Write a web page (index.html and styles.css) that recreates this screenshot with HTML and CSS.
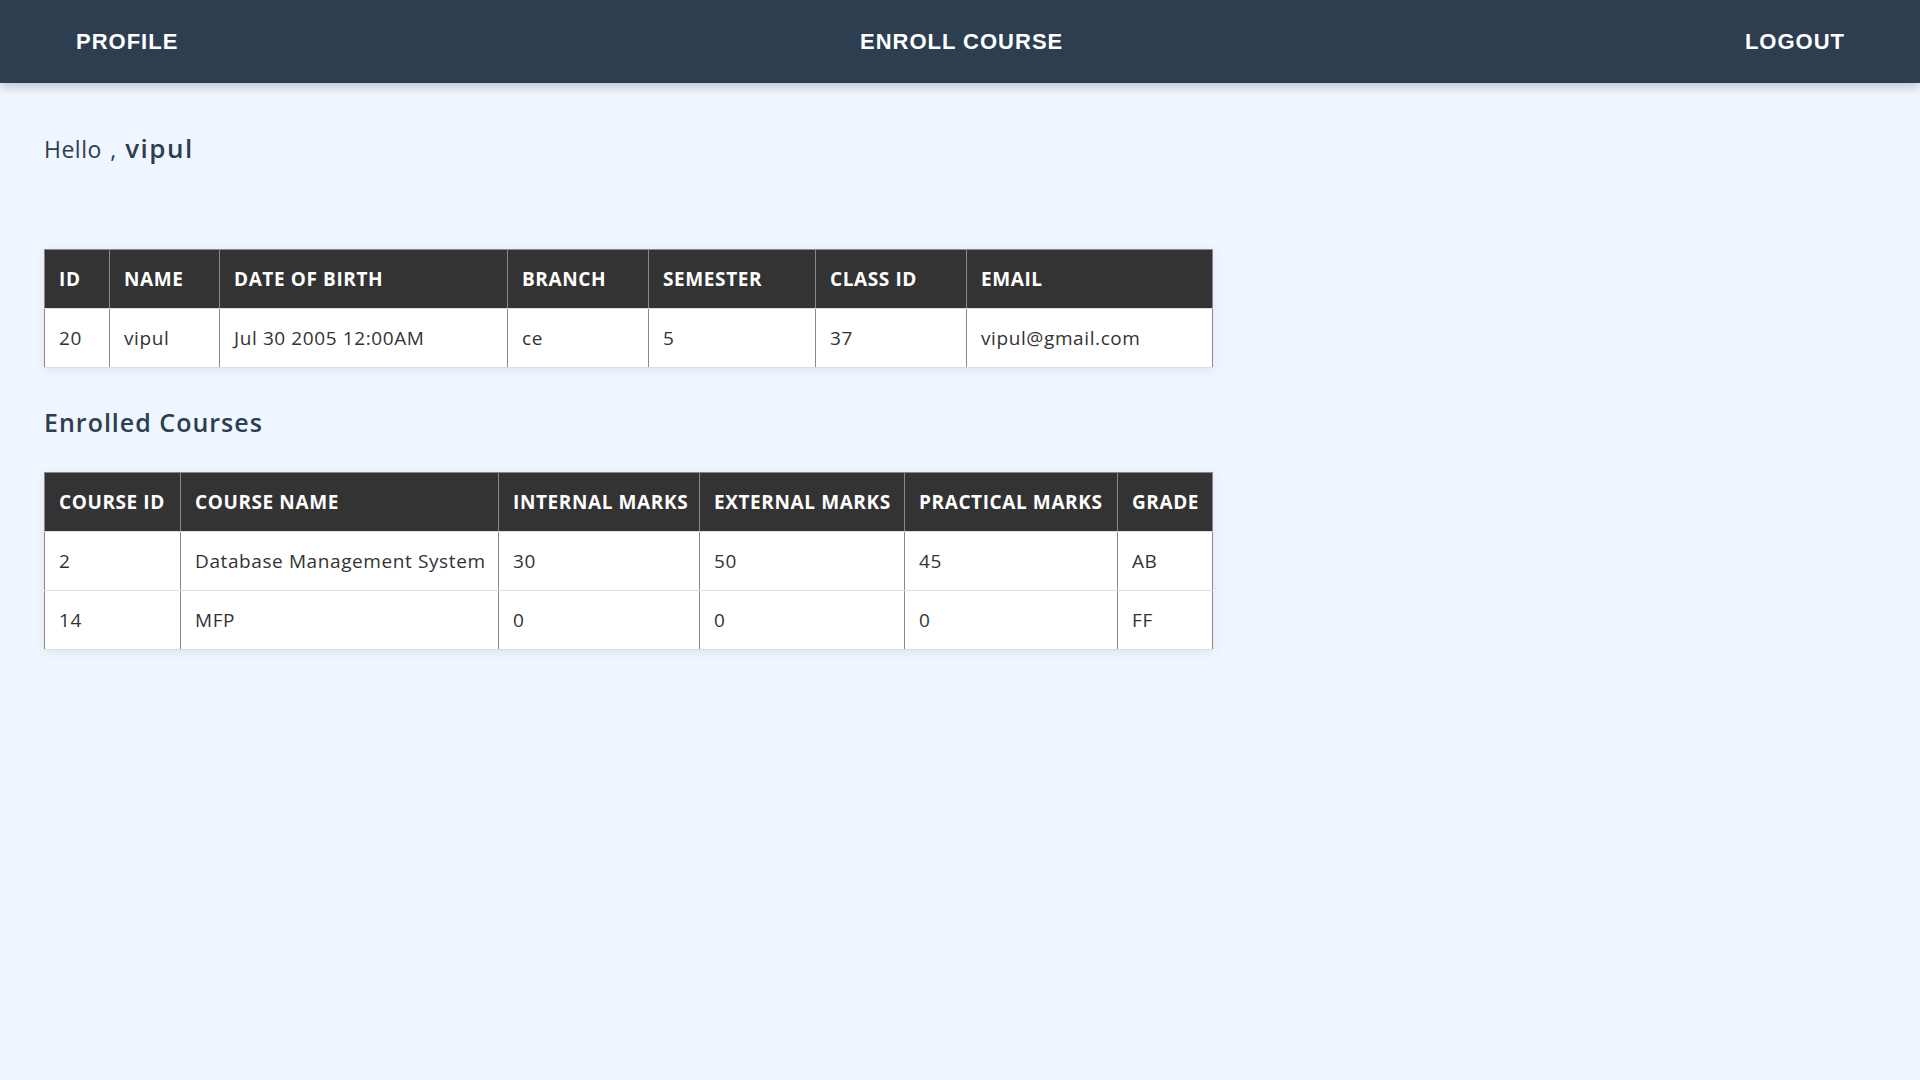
FILE: index.html
```html
<!DOCTYPE html>
<html lang="en">
<head>
<meta charset="utf-8">
<title>Student Dashboard</title>
<link rel="stylesheet" href="styles.css">
</head>
<body>
<nav class="navbar">
  <a class="nav-link" href="#">Profile</a>
  <a class="nav-link" href="#">Enroll Course</a>
  <a class="nav-link" href="#">Logout</a>
</nav>
<main class="content">
  <p class="greeting">Hello , <span class="greeting-name">vipul</span></p>

  <table class="data-table">
    <colgroup>
      <col class="w-65"><col class="w-110"><col class="w-288"><col class="w-141"><col class="w-167"><col class="w-151"><col>
    </colgroup>
    <thead>
      <tr><th>ID</th><th>Name</th><th>Date of Birth</th><th>Branch</th><th>Semester</th><th>Class ID</th><th>Email</th></tr>
    </thead>
    <tbody>
      <tr><td>20</td><td>vipul</td><td>Jul 30 2005 12:00AM</td><td>ce</td><td>5</td><td>37</td><td>vipul@gmail.com</td></tr>
    </tbody>
  </table>

  <h2 class="section-title">Enrolled Courses</h2>

  <table class="data-table">
    <colgroup>
      <col class="w-136"><col class="w-318"><col class="w-201"><col class="w-205"><col class="w-213"><col>
    </colgroup>
    <thead>
      <tr><th>Course ID</th><th>Course Name</th><th>Internal Marks</th><th>External Marks</th><th>Practical Marks</th><th>Grade</th></tr>
    </thead>
    <tbody>
      <tr><td>2</td><td>Database Management System</td><td>30</td><td>50</td><td>45</td><td>AB</td></tr>
      <tr><td>14</td><td>MFP</td><td>0</td><td>0</td><td>0</td><td>FF</td></tr>
    </tbody>
  </table>
</main>
</body>
</html>
```

FILE: styles.css
```css
* {
  box-sizing: border-box;
}

body {
  margin: 0;
  background: #eff6ff;
  font-family: "Open Sans", "Noto Sans", sans-serif;
  color: #333;
  min-height: 100vh;
}

.navbar {
  height: 83px;
  background: #2c3e50;
  display: flex;
  justify-content: space-between;
  align-items: center;
  padding: 0 75px 0 76px;
  box-shadow: 0 4px 10px rgba(0, 0, 0, 0.2);
}

.nav-link {
  font-family: "Liberation Sans", Arial, sans-serif;
  font-weight: 700;
  font-size: 22px;
  letter-spacing: 1px;
  text-transform: uppercase;
  color: #fff;
  text-decoration: none;
}

.content {
  padding: 0 44px;
}

.greeting {
  margin: 49px 0 84px;
  font-size: 23px;
  line-height: 32px;
  letter-spacing: 0.5px;
  word-spacing: 2px;
  color: #2c3e50;
}

.greeting-name {
  font-size: 26px;
  font-weight: 600;
  letter-spacing: 1.5px;
}

.section-title {
  margin: 38px 0 34px;
  font-size: 25px;
  line-height: 32px;
  font-weight: 600;
  letter-spacing: 1px;
  color: #2c3e50;
}

.data-table {
  width: 1169px;
  table-layout: fixed;
  border-collapse: collapse;
  background: #fff;
  box-shadow: 0 2px 10px rgba(0, 0, 0, 0.08);
}

.data-table th,
.data-table td {
  padding: 18px 14px;
  line-height: 22px;
  font-size: 19px;
  letter-spacing: 0.6px;
  text-align: left;
  white-space: nowrap;
  border-left: 1px solid #888;
  border-right: 1px solid #888;
}

.data-table th {
  background: #333;
  color: #fff;
  font-weight: 700;
  text-transform: uppercase;
  border-top: 1px solid #888;
  border-bottom: 1px solid #ddd;
}

.data-table td {
  color: #333;
  border-bottom: 1px solid #ddd;
}

.w-65 { width: 65px; }
.w-110 { width: 110px; }
.w-288 { width: 288px; }
.w-141 { width: 141px; }
.w-167 { width: 167px; }
.w-151 { width: 151px; }
.w-136 { width: 136px; }
.w-318 { width: 318px; }
.w-201 { width: 201px; }
.w-205 { width: 205px; }
.w-213 { width: 213px; }
```
